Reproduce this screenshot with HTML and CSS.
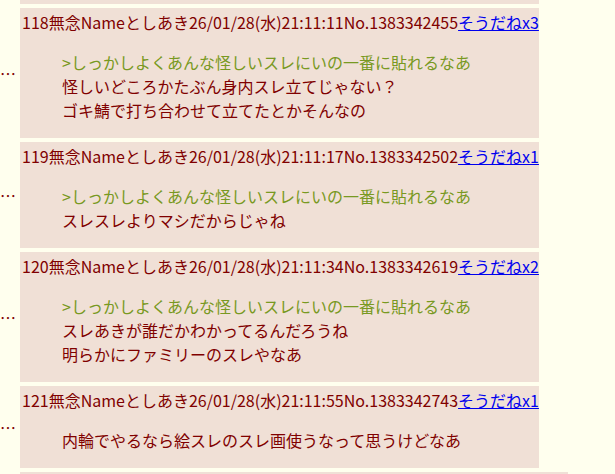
FILE: index.html
```html
<!DOCTYPE html>
<html>
<head>
  <meta charset="utf-8">
  <title>スレッド</title>
  <link rel="stylesheet" href="styles.css">
</head>
<body>
  <div class="thread">
    <div class="post">
      <span class="rts">…</span>
      <div class="rtd">
        <div class="head">117無念Nameとしあき26/01/28(水)21:10:58No.1383342401<a class="sod" href="#">そうだねx1</a></div>
        <blockquote>そういうもんなのか</blockquote>
      </div>
    </div>

    <div class="post">
      <span class="rts">…</span>
      <div class="rtd">
        <div class="head">118無念Nameとしあき26/01/28(水)21:11:11No.1383342455<a class="sod" href="#">そうだねx3</a></div>
        <blockquote>
          <span class="quote">&gt;しっかしよくあんな怪しいスレにいの一番に貼れるなあ</span><br>
          怪しいどころかたぶん身内スレ立てじゃない？<br>
          ゴキ鯖で打ち合わせて立てたとかそんなの
        </blockquote>
      </div>
    </div>

    <div class="post">
      <span class="rts">…</span>
      <div class="rtd">
        <div class="head">119無念Nameとしあき26/01/28(水)21:11:17No.1383342502<a class="sod" href="#">そうだねx1</a></div>
        <blockquote>
          <span class="quote">&gt;しっかしよくあんな怪しいスレにいの一番に貼れるなあ</span><br>
          スレスレよりマシだからじゃね
        </blockquote>
      </div>
    </div>

    <div class="post">
      <span class="rts">…</span>
      <div class="rtd">
        <div class="head">120無念Nameとしあき26/01/28(水)21:11:34No.1383342619<a class="sod" href="#">そうだねx2</a></div>
        <blockquote>
          <span class="quote">&gt;しっかしよくあんな怪しいスレにいの一番に貼れるなあ</span><br>
          スレあきが誰だかわかってるんだろうね<br>
          明らかにファミリーのスレやなあ
        </blockquote>
      </div>
    </div>

    <div class="post">
      <span class="rts">…</span>
      <div class="rtd">
        <div class="head">121無念Nameとしあき26/01/28(水)21:11:55No.1383342743<a class="sod" href="#">そうだねx1</a></div>
        <blockquote>内輪でやるなら絵スレのスレ画使うなって思うけどなあ</blockquote>
      </div>
    </div>

    <div class="post">
      <span class="rts">…</span>
      <div class="rtd">
        <div class="head">122無念Nameとしあき26/01/28(水)21:12:08No.1383342801<a class="sod" href="#">そうだねx1</a></div>
        <blockquote>身内でやってるならもうちょっと上手くやれよって思うけどなあ本当w</blockquote>
      </div>
    </div>
  </div>
</body>
</html>
```

FILE: styles.css
```css
body {
  margin: 0;
  background-color: #ffffee;
  color: #800000;
  font-family: "Noto Sans CJK JP", sans-serif;
  font-size: 16px;
  line-height: 24px;
}
.thread {
  margin-top: -78px;
}
.post {
  display: flex;
  align-items: center;
  gap: 4px;
  margin-bottom: 4px;
}
.rts {
  width: 16px;
  flex: none;
}
.rtd {
  background-color: #f0e0d6;
  padding: 2px 0 0 2px;
}
.head {
  white-space: nowrap;
}
.sod {
  color: #0000ee;
}
blockquote {
  margin: 16px 0 16px 40px;
  white-space: nowrap;
}
.quote {
  color: #789922;
}
```
